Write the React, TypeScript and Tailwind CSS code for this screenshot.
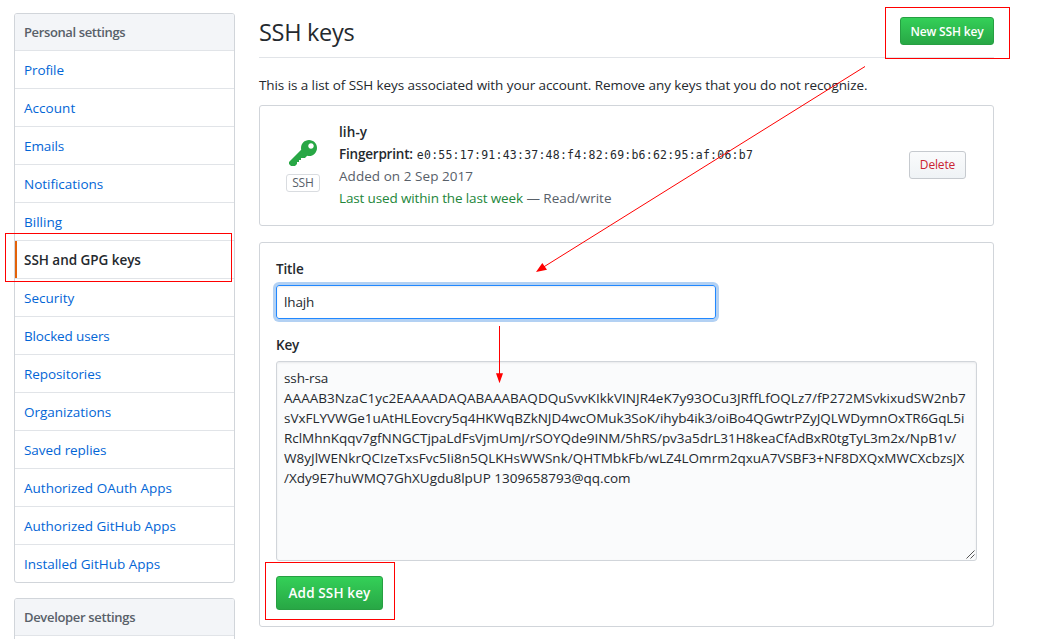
type NavItem = { label: string; tracking: string; active?: boolean };

const personal: NavItem[] = [
  { label: 'Profile', tracking: 'tracking-[-0.12px]' },
  { label: 'Account', tracking: 'tracking-[0.05px]' },
  { label: 'Emails', tracking: 'tracking-[-0.1px]' },
  { label: 'Notifications', tracking: 'tracking-[-0.02px]' },
  { label: 'Billing', tracking: 'tracking-[0.02px]' },
  { label: 'SSH and GPG keys', tracking: 'tracking-[-0.04px]', active: true },
  { label: 'Security', tracking: 'tracking-[0px]' },
  { label: 'Blocked users', tracking: 'tracking-[-0.14px]' },
  { label: 'Repositories', tracking: 'tracking-[-0.08px]' },
  { label: 'Organizations', tracking: 'tracking-[-0.01px]' },
  { label: 'Saved replies', tracking: 'tracking-[-0.06px]' },
  { label: 'Authorized OAuth Apps', tracking: 'tracking-[0px]' },
  { label: 'Authorized GitHub Apps', tracking: 'tracking-[-0.01px]' },
  { label: 'Installed GitHub Apps', tracking: 'tracking-[-0.02px]' },
];

const keyLines: [string, string][] = [
  ['ssh-rsa', 'tracking-[-0.1px]'],
  ['AAAAB3NzaC1yc2EAAAADAQABAAABAQDQuSvvKIkkVINJR4eK7y93OCu3JRffLfOQLz7/fP272MSvkixudSW2nb7', 'tracking-[0.035px]'],
  ['sVxFLYVWGe1uAtHLEovcry5q4HKWqBZkNJD4wcOMuk3SoK/ihyb4ik3/oiBo4QGwtrPZyJQLWDymnOxTR6GqL5i', 'tracking-[-0.03px]'],
  ['RclMhnKqqv7gfNNGCTjpaLdFsVjmUmJ/rSOYQde9INM/5hRS/pv3a5drL31H8keaCfAdBxR0tgTyL3m2x/NpB1v/', 'tracking-[-0.035px]'],
  ['W8yJlWENkrQCIzeTxsFvc5Ii8n5QLKHsWWSnk/QHTMbkFb/wLZ4LOmrm2qxuA7VSBF3+NF8DXQxMWCXcbzsJX', 'tracking-[0.02px]'],
  ['/Xdy9E7huWMQ7GhXUgdu8lpUP 1309658793@qq.com', 'tracking-[-0.01px]'],
];

function MenuHeading({ children, tracking }: { children: string; tracking: string }) {
  return (
    <h3 className={`flex h-[37px] items-center border-b border-[#e1e4e8] bg-[#f3f5f8] pt-[2px] pl-[9px] text-[13px] font-semibold text-[#586069] ${tracking}`}>
      {children}
    </h3>
  );
}

function Sidebar() {
  return (
    <aside className="flex w-[221px] shrink-0 flex-col gap-[15px]">
      <nav className="shrink-0 overflow-hidden rounded-[3px] border border-[#d1d5da]">
        <MenuHeading tracking="tracking-[-0.38px]">Personal settings</MenuHeading>
        {personal.map((item) => (
          <a
            key={item.label}
            className={`flex h-[38px] items-center border-b border-[#e1e4e8] last:h-[37px] last:border-b-0 ${item.tracking} ${
              item.active ? 'font-semibold text-[#24292e]' : 'pl-[9px] text-[#0366d6]'
            }`}
          >
            {item.active && <span className="mr-[7px] h-full w-[2px] bg-[#e36209]" />}
            <span className="pt-[2px]">{item.label}</span>
          </a>
        ))}
      </nav>
      <nav className="h-20 shrink-0 overflow-hidden rounded-[3px] border border-[#d1d5da]">
        <MenuHeading tracking="tracking-[-0.33px]">Developer settings</MenuHeading>
      </nav>
    </aside>
  );
}

function KeyIcon() {
  return (
    <svg width="28" height="32" viewBox="0 0 14 16" fill="#28a745">
      <path
        fillRule="evenodd"
        d="M12.83 2.17C12.08 1.42 11.14 1.03 10 1c-1.13.03-2.08.42-2.83 1.17S6.04 3.86 6.01 5c0 .3.03.59.09.89L0 12v1l1 1h2l1-1v-1h1v-1h1v-1h2l1.09-1.11c.3.08.59.11.91.11 1.14-.03 2.08-.42 2.83-1.17S13.97 6.14 14 5c-.03-1.14-.42-2.08-1.17-2.83zM11 5.38c-.77 0-1.38-.61-1.38-1.38 0-.77.61-1.38 1.38-1.38.77 0 1.38.61 1.38 1.38 0 .77-.61 1.38-1.38 1.38z"
      />
    </svg>
  );
}

function KeyCard() {
  return (
    <section className="mt-[11px] flex h-[121px] items-center rounded-[3px] border border-[#d1d5da] pr-[27px] pb-[2px]">
      <div className="flex w-[79px] shrink-0 flex-col items-center pl-[7px]">
        <KeyIcon />
        <span className="mt-1 flex h-[18px] w-[34px] items-center justify-center rounded-[3px] border border-[#d9dce0] pt-px text-[12px] tracking-[-0.1px] text-[#586069]">
          SSH
        </span>
      </div>
      <div className="flex-1 whitespace-nowrap leading-[22px] text-[#586069]">
        <strong className="block font-semibold tracking-[0.1px] text-[#24292e]">lih-y</strong>
        <div className="flex h-[22px] text-[#24292e]">
          <strong className="mr-1 font-semibold tracking-[-0.2px]">Fingerprint:</strong>
          <code className="pt-px font-['DejaVu_Sans_Mono',monospace] text-[11.5px] tracking-[0.23px]">
            e0:55:17:91:43:37:48:f4:82:69:b6:62:95:af:06:b7
          </code>
        </div>
        <span className="block tracking-[0.05px]">Added on 2 Sep 2017</span>
        <span className="block">
          <span className="tracking-[-0.14px] text-[#22863a]">Last used within the last week</span>{' '}
          <span className="tracking-[-0.03px]">— Read/write</span>
        </span>
      </div>
      <button className="h-7 w-[57px] rounded-[3px] border border-[#c6cacf] bg-linear-to-b from-[#fafbfc] to-[#eff3f6] pt-px text-[12px] font-medium tracking-[-0.15px] text-[#cb2431]">
        Delete
      </button>
    </section>
  );
}

function NewKeyForm() {
  return (
    <section className="mt-4 flex h-[385px] flex-col items-start rounded-[3px] border border-[#d1d5da] px-4 text-[#24292e]">
      <label className="mt-4 h-5 font-semibold leading-5 tracking-[-0.15px]">Title</label>
      <div className="mt-[6px] flex h-[34px] w-[440px] items-center rounded-[3px] border border-[#2188ff] pl-[7px] tracking-[-0.12px] shadow-[inset_0_1px_2px_rgba(27,31,35,0.075),0_0_0_3px_rgba(3,102,214,0.3)]">
        lhajh
      </div>
      <label className="mt-4 h-5 font-semibold leading-5 tracking-[-0.2px]">Key</label>
      <div className="relative mt-[6px] h-[200px] w-[701px] rounded-[3px] border border-[#d1d5da] bg-[#fafbfc] py-[6px] pl-[7px] leading-5 shadow-[inset_0_1px_2px_rgba(27,31,35,0.075)]">
        {keyLines.map(([text, tracking]) => (
          <p key={text} className={`whitespace-nowrap ${tracking}`}>
            {text}
          </p>
        ))}
        <svg className="absolute right-[1px] bottom-[1px]" width="9" height="9" viewBox="0 0 9 9" stroke="#555" strokeWidth="1">
          <path d="M0.5 8.5L8.5 0.5M4.5 8.5L8.5 4.5" />
        </svg>
      </div>
      <button className="mt-[15px] h-[34px] w-[107px] rounded-[3px] border border-[#279f42] bg-linear-to-b from-[#34d058] to-[#28a745] pt-px font-semibold tracking-[0.13px] text-white">
        Add SSH key
      </button>
    </section>
  );
}

function Annotations() {
  return (
    <svg className="pointer-events-none absolute inset-0" width="1043" height="639" fill="none" stroke="#f00">
      <rect x="885.5" y="7.5" width="124" height="51" />
      <rect x="5.5" y="233.5" width="226" height="48" />
      <rect x="265.5" y="562.5" width="129" height="57" />
      <path d="M865 66.5L542 268M499.5 326V376" />
      <path d="M536 272L542.3 263L547 269.7ZM499.5 383.3L496 373.3H503Z" fill="#f00" stroke="none" />
    </svg>
  );
}

export default function App() {
  return (
    <div className="relative flex h-[639px] w-[1043px] gap-6 overflow-hidden bg-white pt-[13px] pl-[14px] font-['Open_Sans','Noto_Sans',sans-serif] text-[13.5px]">
      <Sidebar />
      <main className="w-[735px] shrink-0">
        <header className="flex h-[45px] justify-between border-b border-[#e1e4e8]">
          <h1 className="text-[23.5px] leading-[38px] tracking-[-0.3px] text-[#24292e]">SSH keys</h1>
          <button className="mt-1 h-7 w-[94px] rounded-[3px] border border-[#279f42] bg-linear-to-b from-[#34d058] to-[#28a745] pt-[2px] text-[12px] font-semibold tracking-[-0.16px] text-white">
            New SSH key
          </button>
        </header>
        <p className="mt-[17px] h-[19px] whitespace-nowrap leading-5 tracking-[-0.083px] text-[#24292e]">
          This is a list of SSH keys associated with your account. Remove any keys that you do not recognize.
        </p>
        <KeyCard />
        <NewKeyForm />
      </main>
      <Annotations />
    </div>
  );
}
